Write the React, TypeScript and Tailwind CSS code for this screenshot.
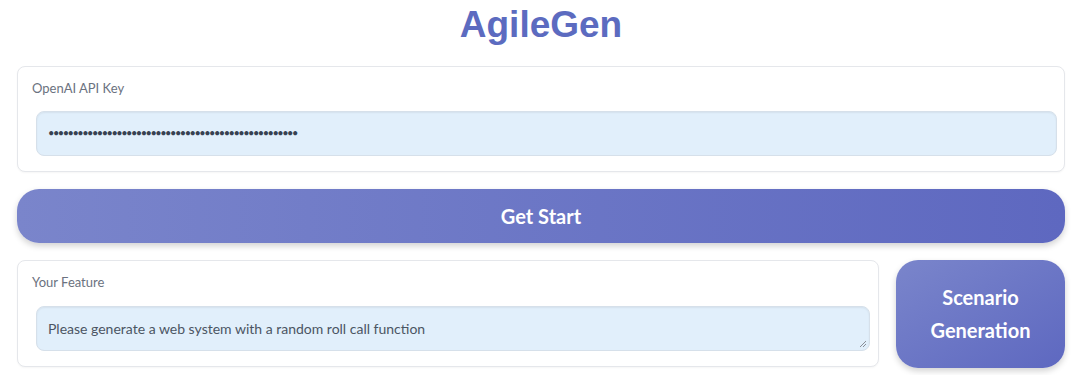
import React from "react";

export default function App() {
  const dots = "•".repeat(51);
  return (
    <div className="w-[1080px] h-[375px] bg-white overflow-hidden pl-[17px] pr-[15px]" style={{ fontFamily: "Lato, 'Open Sans', sans-serif" }}>
      <div className="h-[66px] flex justify-center">
        <h1 className="mt-[3px] text-[37px] font-bold leading-[44px] text-[#5c6bc0]" style={{ fontFamily: "'Liberation Sans', Arial, sans-serif" }}>
          AgileGen
        </h1>
      </div>
      <div className="h-[106px] rounded-[8px] border border-[#e5e7eb] bg-white pl-[18px] pr-[7px] pt-[13px] shadow-[0_1px_2px_rgba(0,0,0,0.04)]">
        <div className="ml-[-4px] text-[13px] leading-[16px] text-[#6b7280]">OpenAI API Key</div>
        <div className="mt-[15px] h-[45px] rounded-[8px] border border-[#d6e0ea] bg-[#e1effb] shadow-[inset_0_1px_2px_rgba(0,0,0,0.06)] flex items-center px-[11px]">
          <span className="text-[11px] tracking-[-1.5px] text-[#374151]">{dots}</span>
        </div>
      </div>
      <button className="mt-[17px] w-full h-[54px] rounded-[22px] bg-gradient-to-r from-[#7a85cb] to-[#5e68c0] text-white text-[20px] font-bold shadow-[0_3px_6px_rgba(0,0,0,0.18)] flex items-center justify-center">
        Get Start
      </button>
      <div className="mt-[17px] flex gap-[17px]">
        <div className="w-[862px] shrink-0 h-[107px] rounded-[8px] border border-[#e5e7eb] bg-white pl-[18px] pr-[8px] pt-[13px] shadow-[0_1px_2px_rgba(0,0,0,0.04)]">
          <div className="ml-[-4px] text-[13px] leading-[16px] text-[#6b7280]">Your Feature</div>
          <div className="relative mt-[16px] h-[45px] rounded-[8px] border border-[#d6e0ea] bg-[#e1effb] shadow-[inset_0_1px_2px_rgba(0,0,0,0.06)] flex items-center px-[11px]">
            <span className="text-[14px] text-[#4b5563]">Please generate a web system with a random roll call function</span>
            <svg className="absolute right-[2px] bottom-[2px]" width="8" height="8" viewBox="0 0 8 8">
              <path d="M7 1 L1 7 M7 4 L4 7" stroke="#8a8f98" strokeWidth="1" />
            </svg>
          </div>
        </div>
        <button className="w-[169px] shrink-0 h-[108px] rounded-[22px] bg-gradient-to-br from-[#7a85cb] to-[#5e68c0] text-white text-[20px] font-bold leading-[33px] shadow-[0_3px_6px_rgba(0,0,0,0.18)] flex flex-col items-center justify-center">
          <span>Scenario</span>
          <span>Generation</span>
        </button>
      </div>
    </div>
  );
}
